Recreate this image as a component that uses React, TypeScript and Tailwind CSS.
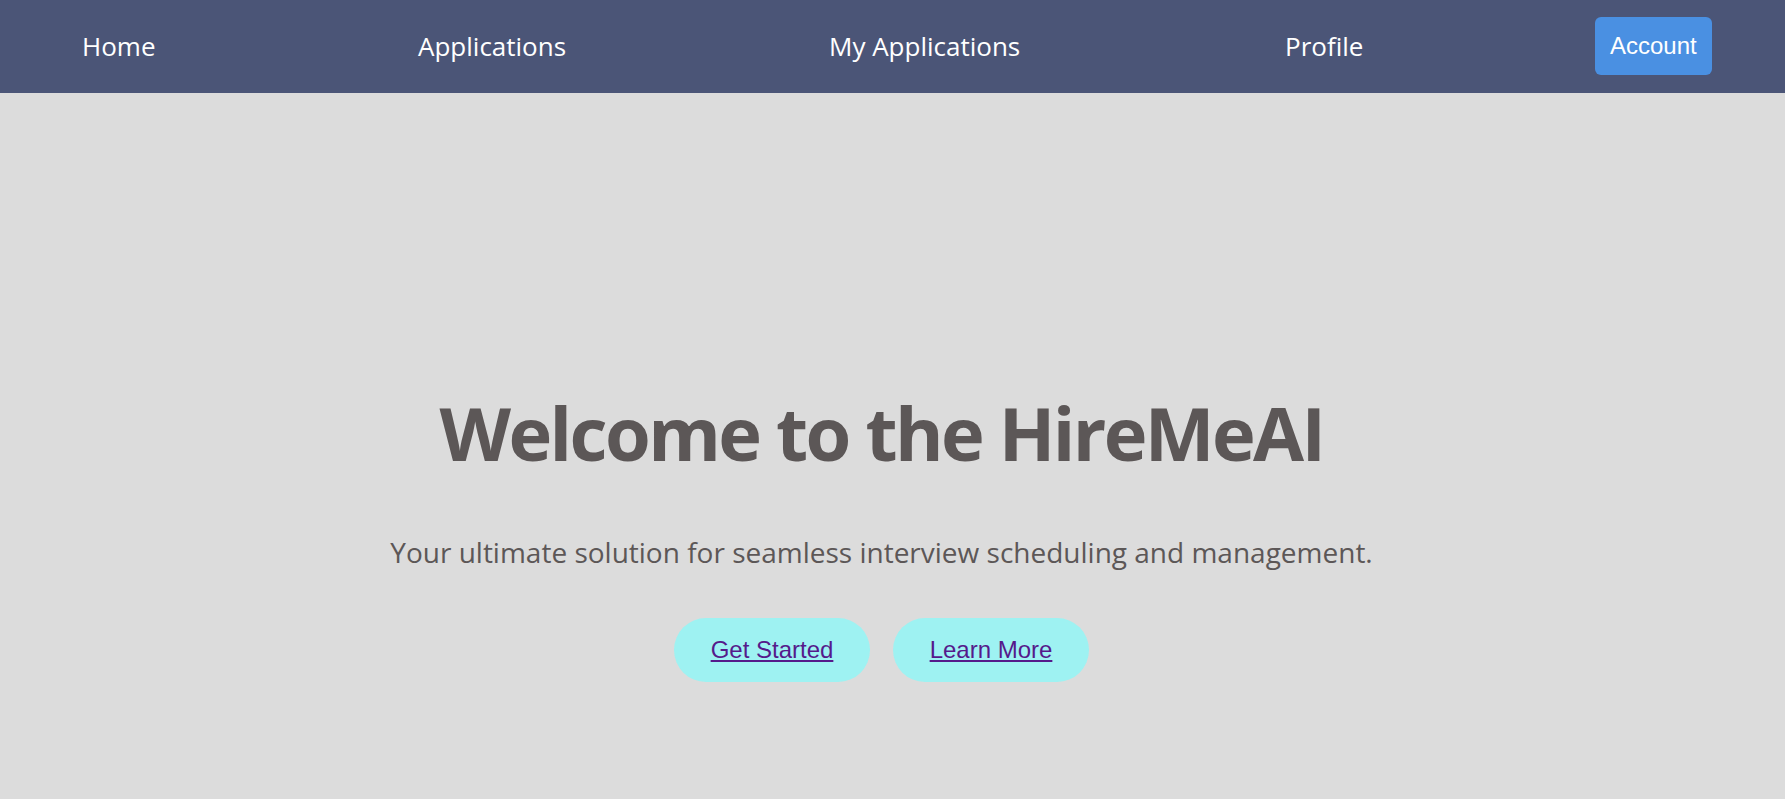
import React from "react";

export default function App() {
  const seg = { fontFamily: '"Open Sans", "Noto Sans", sans-serif' };
  return (
    <div className="min-h-[799px] bg-[#dcdcdc] flex flex-col">
      <nav className="h-[93px] bg-[#4b5577] flex items-center pl-[82px] text-white text-[26px]" style={seg}>
        <a className="w-[336px]">Home</a>
        <a className="w-[411px]">Applications</a>
        <a className="w-[456px]">My Applications</a>
        <a className="w-[310px]">Profile</a>
        <button
          className="bg-[#4a90e2] text-white text-[24px] leading-[28px] px-[15px] py-[15px] rounded-[6px] -mt-[1px]"
          style={{ fontFamily: '"Liberation Sans", Arial, sans-serif' }}
        >
          Account
        </button>
      </nav>
      <main className="flex flex-col items-center pt-[295px] pr-[22px] text-[#5c5757]" style={seg}>
        <h1 className="text-[74px] font-bold leading-[89px] tracking-[-2.6px]">Welcome to the HireMeAI</h1>
        <p className="text-[28px] mt-[54px]">Your ultimate solution for seamless interview scheduling and management.</p>
        <div className="flex gap-[23px] mt-[45px]" style={{ fontFamily: '"Liberation Sans", Arial, sans-serif' }}>
          <a href="#" className="bg-[#9ef2f2] text-[#551a8b] underline text-[24px] leading-[28px] w-[196px] h-[64px] rounded-full flex items-center justify-center">Get Started</a>
          <a href="#" className="bg-[#9ef2f2] text-[#551a8b] underline text-[24px] leading-[28px] w-[196px] h-[64px] rounded-full flex items-center justify-center">Learn More</a>
        </div>
      </main>
    </div>
  );
}
